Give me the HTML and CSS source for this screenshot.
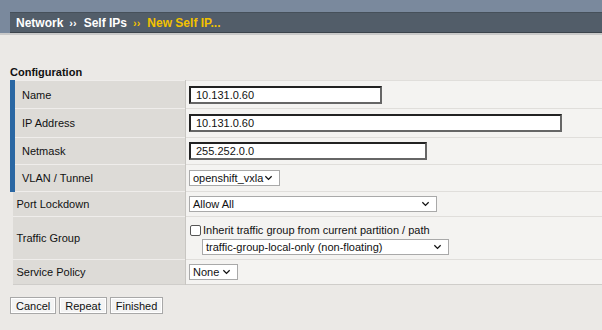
FILE: index.html
```html
<!DOCTYPE html>
<html>
<head>
<meta charset="utf-8">
<link rel="stylesheet" href="styles.css">
</head>
<body>
<div class="top">
  <div class="crumbs">
    <span class="crumb">Network</span><span class="sep">&rsaquo;&rsaquo;</span><span class="crumb">Self IPs</span><span class="sep cur">&rsaquo;&rsaquo;</span><span class="crumb cur">New Self IP...</span>
  </div>
</div>
<div class="content">
  <div class="section-title">Configuration</div>
  <table class="form">
    <tr class="req r1">
      <th>Name</th>
      <td><input class="txt w-name" type="text" value="10.131.0.60"></td>
    </tr>
    <tr class="req r2">
      <th>IP Address</th>
      <td><input class="txt w-ip" type="text" value="10.131.0.60"></td>
    </tr>
    <tr class="req r3">
      <th>Netmask</th>
      <td><input class="txt w-mask" type="text" value="255.252.0.0"></td>
    </tr>
    <tr class="req r4">
      <th>VLAN / Tunnel</th>
      <td><div class="sel w-vlan"><span>openshift_vxla</span><svg viewBox="0 0 10 6" class="chev"><path d="M1.5 1l3.5 3.5 3.5-3.5" /></svg></div></td>
    </tr>
    <tr class="r5">
      <th>Port Lockdown</th>
      <td><div class="sel w-port"><span>Allow All</span><svg viewBox="0 0 10 6" class="chev"><path d="M1.5 1l3.5 3.5 3.5-3.5" /></svg></div></td>
    </tr>
    <tr class="r6">
      <th>Traffic Group</th>
      <td>
        <label class="chk"><span class="box"></span>Inherit traffic group from current partition / path</label>
        <div class="sel w-tg"><span>traffic-group-local-only (non-floating)</span><svg viewBox="0 0 10 6" class="chev"><path d="M1.5 1l3.5 3.5 3.5-3.5" /></svg></div>
      </td>
    </tr>
    <tr class="r7">
      <th>Service Policy</th>
      <td><div class="sel w-none"><span>None</span><svg viewBox="0 0 10 6" class="chev"><path d="M1.5 1l3.5 3.5 3.5-3.5" /></svg></div></td>
    </tr>
  </table>
  <div class="buttons">
    <button class="btn">Cancel</button>
    <button class="btn">Repeat</button>
    <button class="btn">Finished</button>
  </div>
</div>
</body>
</html>
```
FILE: styles.css
```css
* { box-sizing: border-box; }
html, body { margin: 0; padding: 0; }
body {
  width: 602px;
  height: 330px;
  overflow: hidden;
  background: #ebe9e6;
  font-family: "Liberation Sans", Arial, sans-serif;
  font-size: 11px;
  color: #111;
}
.top {
  background: #7a899d;
  padding: 12px 0 0 10px;
  border-bottom: 2px solid #c9c9c9;
}
.crumbs {
  height: 21px;
  background: #525d69;
  border-top: 1px solid #46505a;
  border-bottom: 1px solid #3b434b;
  display: flex;
  align-items: center;
  padding-left: 6px;
  font-weight: bold;
  font-size: 12px;
  color: #fff;
}
.sep { margin: 0 7px 0 6px; font-size: 11px; }
.cur { color: #f2c200; }
.content { padding: 31px 0 0 10px; }
.section-title {
  font-weight: bold;
  font-size: 11px;
  height: 13px;
  line-height: 13px;
  margin-bottom: 1px;
}
.form {
  border-collapse: collapse;
  width: 592px;
  border-bottom: 1px solid #cfcdca;
}
.form th {
  width: 173px;
  text-align: left;
  font-weight: normal;
  background: #dddbd7;
  padding: 0 0 0 7px;
  border-top: 1px solid #efedeb;
  border-right: 1px solid #c8c6c2;
  color: #111;
}
.form tr.req th { border-left: 5px solid #2a67a3; padding-left: 7px; }
.form tr:not(.req) th { padding-left: 4px; }
.form td {
  background: #f4f3f1;
  padding: 0 0 0 3px;
  border-top: 1px solid #e0dedb;
}
.r1 th, .r1 td { height: 28px; }
.r2 th, .r2 td { height: 29px; }
.r3 th, .r3 td { height: 27px; }
.r4 th, .r4 td { height: 27px; }
.r5 th, .r5 td { height: 25px; }
.r6 th, .r6 td { height: 43px; }
.r7 th, .r7 td { height: 25px; }
.r6 td { padding-top: 2px; }
.txt {
  display: block;
  height: 18px;
  border: 2px solid #222;
  border-right-color: #666;
  border-bottom-color: #666;
  outline: none;
  background: #fff;
  font-family: "Liberation Sans", Arial, sans-serif;
  font-size: 11px;
  padding: 0 5px;
  color: #111;
  margin: 0;
}
.w-name { width: 193px; }
.w-ip { width: 373px; }
.w-mask { width: 238px; }
.sel {
  height: 16px;
  border: 1px solid #a9a9a9;
  background: #fff;
  display: flex;
  align-items: center;
  justify-content: space-between;
  padding: 0 6px 0 3px;
  font-size: 11px;
  color: #111;
}
.chev { width: 9px; height: 6px; fill: none; stroke: #111; stroke-width: 1.4; }
.w-vlan { width: 91px; }
.w-port { width: 248px; }
.w-tg { width: 247px; margin-left: 13px; }
.w-none { width: 49px; }
.chk {
  display: flex;
  align-items: center;
  height: 14px;
  margin-bottom: 2px;
  font-size: 11px;
  color: #111;
}
.box {
  width: 11px;
  height: 11px;
  border: 1px solid #555;
  border-radius: 2px;
  background: #fff;
  margin: 0 2px 0 1px;
}
.buttons {
  display: flex;
  gap: 3px;
  margin-top: 12px;
}
.btn {
  height: 17px;
  padding: 0 5px;
  border: 1px solid #a8a8a8;
  background: #f4f4f4;
  font-family: "Liberation Sans", Arial, sans-serif;
  font-size: 11px;
  color: #111;
  margin: 0;
  box-shadow: inset 0 0 0 1px #fff;
}
```
